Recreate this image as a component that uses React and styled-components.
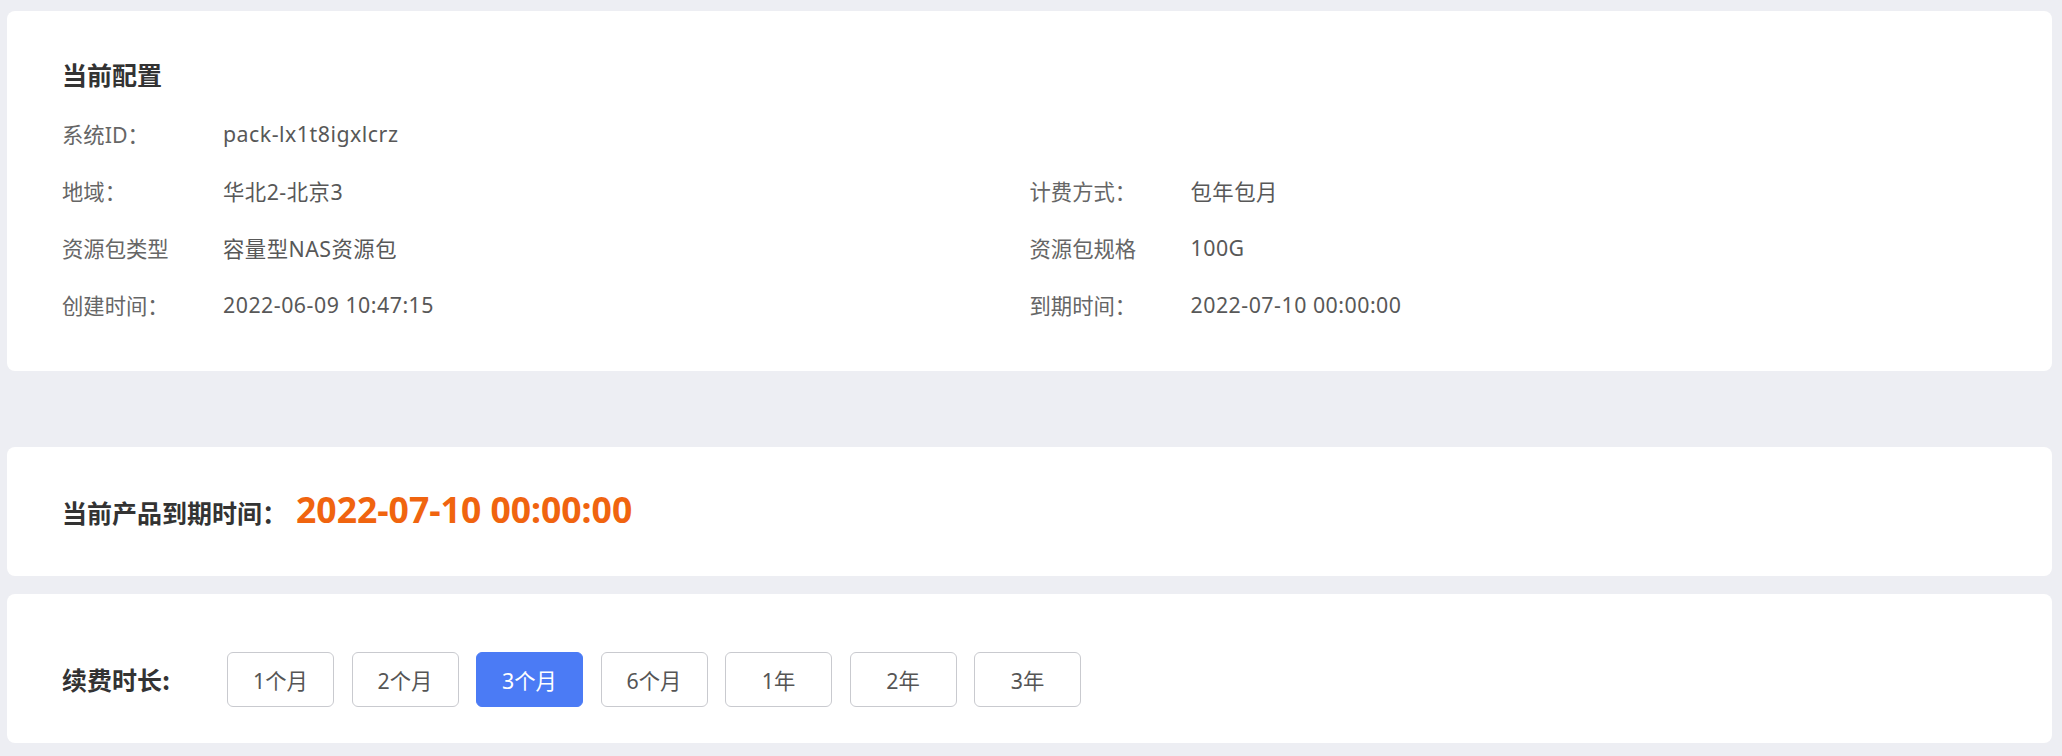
import React from "react";
import styled, { createGlobalStyle } from "styled-components";

const GlobalStyle = createGlobalStyle`
  html, body {
    margin: 0;
    padding: 0;
    background: #edeef3;
  }
  body {
    font-family: "Noto Sans", "Noto Sans CJK SC", sans-serif;
  }
  * { box-sizing: border-box; }
`;

const Page = styled.div`
  display: flex;
  flex-direction: column;
  padding: 11px 10px 13px 7px;
  background: #edeef3;
  min-height: 756px;
`;

const Card = styled.section`
  background: #ffffff;
  border-radius: 8px;
  margin-top: ${(p) => p.$gap || 0}px;
`;

const ConfigCard = styled(Card)`
  height: 360px;
  padding: 47px 55px 0;
`;

const Title = styled.h2`
  margin: 0 0 15px;
  font-family: "Noto Sans CJK SC", sans-serif;
  font-size: 25px;
  line-height: 32px;
  font-weight: 700;
  color: #333333;
`;

const InfoGrid = styled.div`
  display: grid;
  grid-template-columns: 1fr 1fr;
`;

const InfoRow = styled.div`
  display: flex;
  align-items: center;
  height: 57px;
  font-size: 21.33px;
`;

const Label = styled.span`
  width: 161px;
  flex-shrink: 0;
  color: #666666;
`;

const Value = styled.span`
  color: #585858;
  letter-spacing: 0.5px;
`;

const ExpireCard = styled(Card)`
  height: 129px;
  padding: 0 55px;
  display: flex;
  align-items: center;
`;

const ExpireLabel = styled.span`
  font-family: "Noto Sans CJK SC", sans-serif;
  font-size: 25px;
  font-weight: 700;
  color: #333333;
  margin-right: 9px;
`;

const ExpireDate = styled.span`
  font-family: "Noto Sans", sans-serif;
  font-size: 35.5px;
  font-weight: 700;
  color: #f0640f;
  position: relative;
  top: -3px;
`;

const RenewCard = styled(Card)`
  height: 149px;
  padding: 58px 55px 0;
  display: flex;
  align-items: flex-start;
`;

const RenewLabel = styled.span`
  width: 165px;
  flex-shrink: 0;
  height: 55px;
  line-height: 55px;
  font-family: "Noto Sans CJK SC", sans-serif;
  font-size: 25px;
  font-weight: 700;
  color: #333333;
`;

const Options = styled.div`
  display: flex;
  gap: 17.5px;
`;

const Option = styled.button`
  width: 107px;
  height: 55px;
  border-radius: 6px;
  border: 1px solid ${(p) => (p.$active ? "#4b7bf5" : "#c9cacf")};
  background: ${(p) => (p.$active ? "#4b7bf5" : "#ffffff")};
  color: ${(p) => (p.$active ? "#ffffff" : "#555555")};
  font-family: "Noto Sans", "Noto Sans CJK SC", sans-serif;
  font-size: 21.33px;
  padding: 0;
  cursor: pointer;
`;

const rows = [
  [["系统ID：", "pack-lx1t8igxlcrz"], null],
  [["地域：", "华北2-北京3"], ["计费方式：", "包年包月"]],
  [["资源包类型", "容量型NAS资源包"], ["资源包规格", "100G"]],
  [["创建时间：", "2022-06-09 10:47:15"], ["到期时间：", "2022-07-10 00:00:00"]],
];

const durations = ["1个月", "2个月", "3个月", "6个月", "1年", "2年", "3年"];

export default function App() {
  return (
    <>
      <GlobalStyle />
      <Page>
        <ConfigCard>
          <Title>当前配置</Title>
          <InfoGrid>
            {rows.flatMap((pair, i) =>
              pair.map((cell, j) => (
                <InfoRow key={`${i}-${j}`}>
                  {cell && (
                    <>
                      <Label>{cell[0]}</Label>
                      <Value>{cell[1]}</Value>
                    </>
                  )}
                </InfoRow>
              ))
            )}
          </InfoGrid>
        </ConfigCard>
        <ExpireCard $gap={76}>
          <ExpireLabel>当前产品到期时间：</ExpireLabel>
          <ExpireDate>2022-07-10 00:00:00</ExpireDate>
        </ExpireCard>
        <RenewCard $gap={18}>
          <RenewLabel>续费时长:</RenewLabel>
          <Options>
            {durations.map((d) => (
              <Option key={d} $active={d === "3个月"}>
                {d}
              </Option>
            ))}
          </Options>
        </RenewCard>
      </Page>
    </>
  );
}
